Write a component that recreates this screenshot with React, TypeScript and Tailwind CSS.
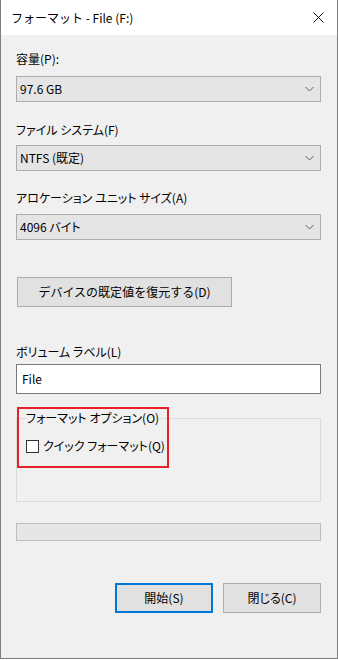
import React from 'react';

const font = { fontFamily: '"Noto Sans CJK JP", "Noto Sans", sans-serif' };

function Chevron() {
    return (
        <svg width="9" height="6" viewBox="0 0 9 6" className="text-[#606060]">
            <path d="M0.5 1 L4.5 5 L8.5 1" fill="none" stroke="currentColor" strokeWidth="1" />
        </svg>
    );
}

function Select({ value }: { value: string }) {
    return (
        <div className="h-[26px] w-[305px] flex items-center justify-between border border-[#adadad] bg-[#e5e5e5] pl-[3px] pr-[6px] text-[12px] text-black">
            <span>{value}</span>
            <Chevron />
        </div>
    );
}

function Label({ text, className = '' }: { text: string; className?: string }) {
    return <div className={`h-[16px] leading-[16px] text-[12px] text-black ${className}`}>{text}</div>;
}

export default function App() {
    return (
        <div className="relative w-[338px] h-[660px] bg-white [font-feature-settings:'palt']" style={font}>
            <div className="w-[338px] h-[659px] border-x border-b border-[#7f7f7f] flex flex-col">
                {/* title bar */}
                <div className="h-[35px] bg-white flex items-center justify-between pl-[10px] pr-[13px]">
                    <span className="text-[12px] text-black leading-none [font-feature-settings:normal]">フォーマット - File (F:)</span>
                    <svg width="11" height="11" viewBox="0 0 11 11">
                        <path d="M0.5 0.5 L10.5 10.5 M10.5 0.5 L0.5 10.5" stroke="#111" strokeWidth="1" />
                    </svg>
                </div>

                {/* body */}
                <div className="flex-1 bg-[#f0f0f0] pl-[15px] flex flex-col">
                    <Label text="容量(P):" className="mt-[16px]" />
                    <div className="mt-[9px]"><Select value="97.6 GB" /></div>

                    <Label text="ファイル システム(F)" className="mt-[20px]" />
                    <div className="mt-[7px]"><Select value="NTFS (既定)" /></div>

                    <Label text="アロケーション ユニット サイズ(A)" className="mt-[19px]" />
                    <div className="mt-[8px]"><Select value="4096 バイト" /></div>

                    <button className="mt-[37px] ml-[1px] h-[30px] w-[215px] border border-[#adadad] bg-[#e1e1e1] text-[12px] text-black [font-feature-settings:normal]">
                        デバイスの既定値を復元する(D)
                    </button>

                    <Label text="ボリューム ラベル(L)" className="mt-[37px]" />
                    <div className="mt-[4px] h-[30px] w-[305px] border border-[#7a7a7a] bg-white flex items-center pl-[5px] text-[12px] text-black">
                        File
                    </div>

                    <fieldset className="mt-[16px] w-[305px] h-[92px] border border-[#dcdcdc] pl-[9px] pr-0 pb-0">
                        <legend className="text-[12px] leading-[16px] text-black">フォーマット オプション(O)</legend>
                        <div className="mt-[12px] flex items-center gap-[4px]">
                            <div className="w-[13px] h-[13px] border border-[#333] bg-white" />
                            <span className="text-[12px] leading-[16px] text-black">クイック フォーマット(Q)</span>
                        </div>
                    </fieldset>

                    <div className="mt-[21px] h-[18px] w-[305px] border border-[#bcbcbc] bg-[#e6e6e6]" />

                    <div className="mt-[42px] w-[305px] flex justify-end gap-[10px]">
                        <button className="h-[30px] w-[98px] border-2 border-[#0078d7] bg-[#e1e1e1] text-[12px] text-black">
                            開始(S)
                        </button>
                        <button className="h-[30px] w-[98px] border border-[#adadad] bg-[#e1e1e1] text-[12px] text-black">
                            閉じる(C)
                        </button>
                    </div>
                </div>
            </div>

            {/* red annotation */}
            <div className="absolute left-[17px] top-[407px] w-[152px] h-[61px] border-2 border-[#e8202a]" />
        </div>
    );
}
